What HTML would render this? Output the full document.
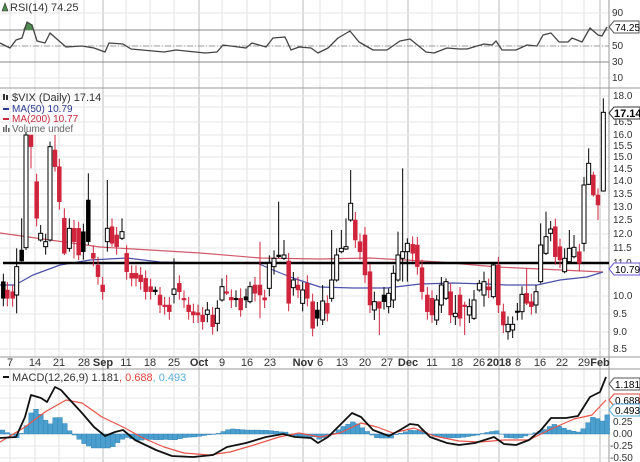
<!DOCTYPE html>
<html><head><meta charset="utf-8"><style>
html,body{margin:0;padding:0;background:#fff;}
svg{display:block;font-family:"Liberation Sans",sans-serif;}
</style></head><body>
<svg id="s" width="640" height="462" viewBox="0 0 640 462" xmlns="http://www.w3.org/2000/svg">
<rect width="640" height="462" fill="#fff"/>
<g id="grid"></g>
<g id="content"></g>
<g font-size="10" fill="#333">
<path d="M2 11 l3 -8 l3 8z" fill="#4f8a4f" stroke="#333" stroke-width="0.6"/>
<text x="10" y="11" font-size="11">RSI(14) 74.25</text>
<text x="612" y="16">90</text><text x="612" y="49">50</text><text x="612" y="65">30</text><text x="612" y="81">10</text>
<rect x="3" y="94" width="2" height="6" fill="#333"/><rect x="6" y="95" width="2" height="5" fill="#333"/>
<text x="12" y="101" font-size="11">$VIX (Daily) 17.14</text>
<rect x="3" y="108" width="6" height="2" fill="#2b3a8f"/>
<text x="12" y="112" fill="#2b3a8f">MA(50) 10.79</text>
<rect x="3" y="118" width="6" height="2" fill="#c8283c"/>
<text x="12" y="122" fill="#c8283c">MA(200) 10.77</text>
<rect x="3" y="127" width="1.5" height="5" fill="#666"/><rect x="5.5" y="125" width="1.5" height="7" fill="#666"/><rect x="8" y="128" width="1.5" height="4" fill="#666"/>
<text x="12" y="132" fill="#666">Volume undef</text>
<text x="613" y="99">18.0</text><text x="613" y="138">16.0</text><text x="613" y="125">16.5</text>
<text x="613" y="149">15.5</text><text x="613" y="160">15.0</text><text x="613" y="172">14.5</text><text x="613" y="184">14.0</text>
<text x="613" y="197">13.5</text><text x="613" y="210">13.0</text><text x="613" y="223">12.5</text><text x="613" y="237">12.0</text>
<text x="613" y="251">11.5</text><text x="613" y="266">11.0</text><text x="613" y="299">10.0</text>
<text x="613" y="317">9.5</text><text x="613" y="335">9.0</text><text x="613" y="352">8.5</text>
<rect x="3" y="376" width="6" height="2" fill="#111"/>
<text x="12" y="381" font-size="11">MACD(12,26,9) 1.181<tspan fill="#e0453c">, 0.688</tspan><tspan fill="#5aaedc">, 0.493</tspan></text>
<text x="613" y="389">1.00</text><text x="613" y="425">0.25</text><text x="613" y="437">0.00</text>
<text x="610" y="449">-0.25</text><text x="610" y="461">-0.50</text>
</g>
<g font-size="11" fill="#333" text-anchor="middle" id="dates"></g>
<g font-size="10">
<path d="M609 27 l5 -6 h25 v12 h-25z" fill="#fff" stroke="#555"/><text x="615" y="31">74.25</text>
<path d="M609 113 l5 -6 h26 v12 h-26z" fill="#fff" stroke="#333"/><text x="614" y="117" font-weight="bold" font-size="11">17.14</text>
<path d="M609 269 l5 -6 h26 v12 h-26z" fill="#fff" stroke="#6a5acd"/><text x="615" y="273">10.79</text>
<path d="M609 384 l5 -6 h26 v12 h-26z" fill="#fff" stroke="#555"/><text x="615" y="388">1.181</text>
<path d="M609 400 l5 -6 h26 v12 h-26z" fill="#fff" stroke="#e0453c"/><text x="615" y="404">0.688</text>
<path d="M609 410 l5 -6 h26 v12 h-26z" fill="#fff" stroke="#5aaedc"/><text x="615" y="414">0.493</text>
</g>
</svg>
<script>
var NS="http://www.w3.org/2000/svg";
function el(p,t,a){var e=document.createElementNS(NS,t);for(var k in a)e.setAttribute(k,a[k]);p.appendChild(e);return e;}
var G=document.getElementById('grid'),C=document.getElementById('content'),D=document.getElementById('dates');
var dates=[[10,'7'],[35,'14'],[59,'21'],[84,'28'],[103,'Sep',1],[126,'11'],[150,'18'],[174,'25'],[199,'Oct',1],[222,'9'],[247,'16'],[270,'23'],[303,'Nov',1],[320,'6'],[342,'13'],[365,'20'],[387,'27'],[408,'Dec',1],[432,'11'],[457,'18'],[479,'26'],[499,'2018',1],[518,'8'],[540,'16'],[562,'22'],[584,'29'],[600,'Feb',1]];
dates.forEach(function(d){
 el(G,'line',{x1:d[0],x2:d[0],y1:0,y2:462,stroke:d[2]?'#bbb':'#e2e2e2','stroke-width':1});
 var t=el(D,'text',{x:d[0],y:366});t.textContent=d[1];if(d[2])t.setAttribute('font-weight','bold');
});
[13,46,78,96,107,122,135,146,157,169,181,194,207,220,234,248,263,278,296,314,332,349,386,398,410,422,434,446,458].forEach(function(y){
 el(G,'line',{x1:0,x2:609,y1:y,y2:y,stroke:'#e6e6e6'});});
[[0,88],[0,357],[0,369]].forEach(function(b){el(G,'line',{x1:0,x2:640,y1:b[1],y2:b[1],stroke:'#999'});});
el(G,'line',{x1:609,x2:609,y1:0,y2:462,stroke:'#999'});
el(C,'line',{x1:0,x2:609,y1:30,y2:30,stroke:'#888'});
el(C,'line',{x1:0,x2:609,y1:62,y2:62,stroke:'#888'});
el(C,'line',{x1:0,x2:609,y1:46,y2:46,stroke:'#999','stroke-dasharray':'6 2 1 2'});
el(C,'path',{d:'M23 30 L27 22 L32 25 L34 30Z',fill:'#4f8a4f'});
var rsi=[[0,43],[10,48],[16,40],[22,38],[27,22],[32,25],[37,41],[45,43],[50,33],[66,47],[82,46],[94,48],[105,52],[109,43],[123,44],[131,49],[164,52],[176,50],[205,53],[217,52],[223,45],[246,48],[252,43],[266,47],[273,38],[285,37],[291,50],[299,47],[311,48],[318,53],[328,48],[338,38],[350,31],[359,42],[373,50],[387,50],[400,41],[410,39],[426,52],[434,53],[447,48],[459,49],[467,49],[484,44],[492,45],[496,41],[502,50],[516,50],[527,45],[537,46],[543,35],[551,33],[559,42],[568,42],[572,38],[582,42],[590,28],[598,35],[602,36],[607,27]];
function pl(pts,col,w){el(C,'polyline',{points:pts.map(function(p){return p.join(',')}).join(' '),fill:'none',stroke:col,'stroke-width':w,'stroke-linejoin':'round'});}
pl(rsi,'#444',1.3);
pl([[0,233],[100,247],[200,253],[260,258],[320,259],[370,258],[440,262],[497,267],[540,269],[603,272]],'#d05a6a',1.2);
pl([[0,285],[15,285],[33,275],[60,265],[90,260],[127,258],[160,262],[200,263],[257,263],[273,270],[293,278],[320,287],[353,288],[387,288],[420,284],[453,283],[487,284],[507,285],[537,285],[560,280],[587,277],[603,272]],'#4a50a8',1.2);
el(C,'line',{x1:3,x2:609,y1:263,y2:263,stroke:'#000','stroke-width':2.5});
var A=[[10,590,640,'b'],[22,615,640,'r'],[38,620,640,'r',600,665],[50,545,630,'w',490,685],[65,495,528,'b',400,530],[78,150,488,'w',140,495],[93,150,185,'r',150,250],[110,290,400,'r'],[122,445,465,'w',420,470],[137,470,485,'w'],[150,185,465,'w',170,470],[165,195,245,'r',150,260],[178,245,350,'r'],[193,400,505,'r',370,510],[208,430,490,'w',400,500],[222,430,470,'r',405,520],[236,430,510,'r',410,525],[250,440,500,'b'],[265,345,470,'b',265,480],[280,505,520,'r'],[294,540,575,'r'],[308,600,620,'r'],[322,430,470,'w',285,500],[336,425,475,'r',400,485],[350,450,485,'r'],[366,440,460,'w',400,465],[380,505,560,'r'],[395,565,580,'r'],[408,565,580,'r'],[422,570,590,'r'],[437,580,620,'r'],[452,605,620,'r'],[466,615,620,'b',605,630],[480,630,660,'r'],[494,660,665,'r'],[508,660,680,'r'],[522,612,628,'w',520,655],[538,595,620,'r'],[552,640,645,'r'],[566,660,680,'r'],[580,680,690,'r'],[594,683,690,'r'],[608,690,710,'r'],[622,675,688,'w'],[638,690,725,'r'],[652,670,715,'w'],[666,605,645,'w',580,650],[680,620,625,'r',570,630],[694,637,645,'r'],[708,640,642,'b'],[722,640,675,'r',610,695],[738,635,645,'b'],[750,605,650,'w',590,655],[765,600,625,'r'],[780,600,630,'r',470,700],[794,638,645,'r'],[808,535,610,'w'],[822,520,545,'w'],[836,510,515,'b',350,520],[852,510,520,'w',465,525],[866,528,655,'r'],[880,585,608,'w'],[894,600,615,'r'],[908,615,655,'w'],[922,595,640,'r'],[938,650,730,'r'],[952,675,700,'b']];
var B=[[8,648,705,'w',600,720],[22,655,685,'r'],[35,585,640,'w',435,650],[50,510,585,'w',490,590],[64,490,500,'w',435,505],[78,485,492,'w',400,495],[92,355,405,'w',255,410],[106,405,465,'r'],[120,470,500,'r'],[135,450,570,'r'],[150,560,660,'r'],[163,650,675,'w',620,705],[178,650,670,'r',650,750],[192,630,650,'b'],[206,625,665,'w',610,685],[220,565,645,'w'],[234,510,585,'w',440,590],[248,500,520,'w',250,590],[262,475,500,'w',460,590],[278,478,505,'r'],[292,480,545,'r'],[306,548,620,'r'],[322,630,680,'r'],[336,640,690,'r'],[350,645,705,'w',630,720],[364,600,660,'w'],[378,590,640,'w',580,645],[392,620,690,'r'],[406,685,695,'w',630,720],[420,630,700,'r'],[434,660,665,'r',650,750],[448,665,690,'w'],[462,645,700,'w',615,705],[478,595,615,'w',585,620],[492,590,630,'w',560,665],[506,605,615,'r'],[520,540,635,'w',535,640],[535,540,660,'r'],[550,680,720,'r'],[564,718,740,'w'],[578,718,735,'w'],[592,678,682,'b'],[606,628,680,'w'],[620,625,655,'r',550,660],[634,650,665,'r'],[648,620,660,'w',600,685],[662,480,590,'w',415,595],[678,455,505,'w',380,510],[692,432,445,'w'],[706,425,515,'r'],[720,485,525,'r'],[734,520,560,'w',490,565],[748,490,530,'w',435,535],[762,487,515,'w',450,520],[778,500,535,'r'],[792,300,475,'w'],[806,235,298,'w',190,300],[820,270,330,'r',260,335],[834,330,360,'r',310,405],[850,82,318,'w',40,320]];
function candle(x,t,b,ty,h,l){
 var col=ty=='r'?'#d0243c':'#000';h=h||t-8;l=l||b+8;
 el(C,'line',{x1:x,x2:x,y1:h,y2:l,stroke:col,'stroke-width':1});
 el(C,'rect',{x:x-2,y:t,width:4,height:Math.max(b-t,1.5),fill:ty=='w'?'#fff':col,stroke:col,'stroke-width':ty=='w'?1:0.5});
}
A.forEach(function(c){candle(c[0]/3,c[1]/3+85,c[2]/3+85,c[3],c[4]?c[4]/3+85:0,c[5]?c[5]/3+85:0);});
B.forEach(function(c){candle(c[0]/3+320,c[1]/3+85,c[2]/3+85,c[3],c[4]?c[4]/3+85:0,c[5]?c[5]/3+85:0);});
var m=[[0,438],[16,437],[25,417],[31,395],[41,398],[47,402],[55,387],[61,390],[70,400],[82,413],[94,427],[105,436],[115,432],[123,430],[135,440],[156,450],[172,456],[193,457],[213,455],[227,447],[246,443],[266,437],[283,434],[295,437],[311,438],[318,443],[328,437],[340,425],[352,413],[361,417],[373,430],[389,436],[400,430],[410,424],[418,425],[430,437],[447,443],[459,445],[475,443],[494,437],[504,444],[516,445],[529,440],[541,430],[551,418],[566,418],[578,416],[590,397],[600,392],[606,377]];
var s=[[0,442],[25,427],[45,412],[66,400],[82,403],[102,417],[123,427],[143,438],[164,447],[184,453],[209,455],[230,452],[254,445],[279,437],[299,433],[320,437],[340,433],[361,423],[377,427],[393,433],[414,428],[434,436],[459,441],[480,442],[504,440],[529,440],[549,430],[574,419],[592,415],[606,400]];
function interp(a,x){for(var i=1;i<a.length;i++){if(x<=a[i][0]){var p=a[i-1],q=a[i],f=(x-p[0])/(q[0]-p[0]);return p[1]+f*(q[1]-p[1]);}}return a[a.length-1][1];}
for(var x=0;x<606;x+=4.8){var h=(interp(s,x)-interp(m,x))*(x<140?1.0:0.9);if(h<0)h=Math.max(h,-14);
 el(C,'rect',{x:x,y:h>0?434-h:434,width:4.8,height:Math.abs(h),fill:'#4b9fcf',stroke:'#2f7fb0','stroke-width':0.4});}
pl(s,'#e8554a',1.2);
pl(m,'#111',1.8);
</script>
</body></html>
